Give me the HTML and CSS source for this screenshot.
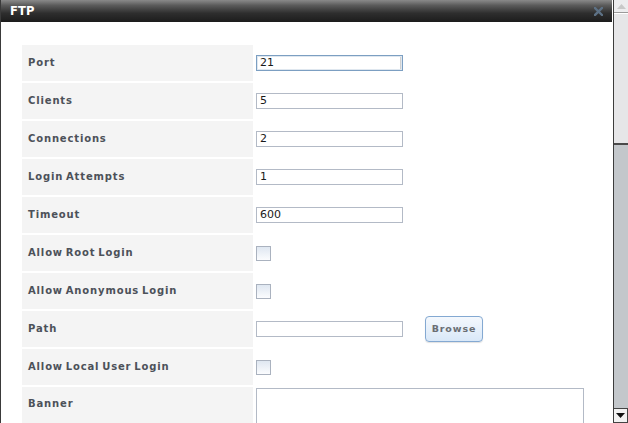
FILE: index.html
```html
<!DOCTYPE html>
<html>
<head>
<meta charset="utf-8">
<link rel="stylesheet" href="styles.css">
</head>
<body>
<div class="frame">
  <div class="dialog">
    <div class="titlebar">
      <span class="title">FTP</span>
      <svg class="close" width="9" height="9" viewBox="0 0 9 9"><path d="M1 1 L8 8 M8 1 L1 8" stroke="#5d7185" stroke-width="2.4" stroke-linecap="square"/></svg>
    </div>
    <div class="content">
      <div class="form">
        <div class="label">Port</div>
        <div class="field"><input class="text focus" type="text" value="21"></div>
        <div class="label">Clients</div>
        <div class="field"><input class="text" type="text" value="5"></div>
        <div class="label">Connections</div>
        <div class="field"><input class="text" type="text" value="2"></div>
        <div class="label">Login Attempts</div>
        <div class="field"><input class="text" type="text" value="1"></div>
        <div class="label">Timeout</div>
        <div class="field"><input class="text" type="text" value="600"></div>
        <div class="label">Allow Root Login</div>
        <div class="field"><span class="check"></span></div>
        <div class="label">Allow Anonymous Login</div>
        <div class="field"><span class="check"></span></div>
        <div class="label">Path</div>
        <div class="field"><input class="text" type="text" value=""><button class="browse">Browse</button></div>
        <div class="label">Allow Local User Login</div>
        <div class="field"><span class="check"></span></div>
        <div class="label tall">Banner</div>
        <div class="field top"><textarea class="area"></textarea></div>
      </div>
    </div>
  </div>
  <div class="scrollbar">
    <div class="sb-btn up"><svg width="9" height="5" viewBox="0 0 9 5"><path d="M0 5 L4.5 0 L9 5 Z" fill="#c8c8c8"/></svg></div>
    <div class="sb-thumb"></div>
    <div class="sb-track"></div>
    <div class="sb-btn down"><svg width="9" height="5" viewBox="0 0 9 5"><path d="M0 0 L9 0 L4.5 5 Z" fill="#111"/></svg></div>
  </div>
</div>
</body>
</html>
```
FILE: styles.css
```css
html, body {
  margin: 0;
  padding: 0;
  width: 628px;
  height: 423px;
  overflow: hidden;
  background: #fff;
}
.frame {
  display: flex;
  width: 628px;
  height: 423px;
}
.dialog {
  width: 612px;
  border-left: 1px solid #3a3a3a;
  box-sizing: border-box;
  overflow: hidden;
  background: #fff;
  margin-right: 1px;
}
.titlebar {
  height: 22px;
  background: linear-gradient(#8a8a8a 0%, #5a5a5a 25%, #2e2e2e 60%, #1c1c1c 100%);
  display: flex;
  align-items: center;
  justify-content: space-between;
  padding: 0 9px 0 9px;
  box-sizing: border-box;
}
.title {
  font-family: "DejaVu Sans", sans-serif;
  font-weight: bold;
  font-size: 11.5px;
  color: #fff;
  letter-spacing: 0.2px;
  margin-top: -1px;
}
.close {
  margin-top: 1px;
}
.content {
  padding: 23px 0 0 21px;
}
.form {
  display: grid;
  grid-template-columns: 231px 1fr;
  grid-auto-rows: 36px;
  row-gap: 2px;
}
.label {
  background: #f4f4f4;
  font-family: "DejaVu Sans", sans-serif;
  font-weight: bold;
  font-size: 10px;
  letter-spacing: 0.85px;
  word-spacing: -1.5px;
  color: #4c5159;
  display: flex;
  align-items: center;
  padding-left: 6px;
  padding-bottom: 2px;
  box-sizing: border-box;
}
.label.tall {
  align-items: flex-start;
  padding-top: 11px;
}
.field {
  display: flex;
  align-items: center;
  padding-left: 3px;
}
.field.top {
  align-items: flex-start;
  padding-top: 1px;
}
.text {
  width: 147px;
  height: 16px;
  box-sizing: border-box;
  border: 1px solid #b3bac6;
  padding: 0 3px;
  margin: 0 0 1px 0;
  font-family: "DejaVu Sans", sans-serif;
  font-size: 11px;
  color: #1a1a1a;
  background: #fff;
  outline: none;
}
.text.focus {
  border-color: #7c9fc2;
  box-shadow: inset 0 0 0 1px #dfe7ef, inset -2px 0 0 #d0d0d0;
}
.check {
  width: 15px;
  height: 15px;
  box-sizing: border-box;
  border: 1px solid #aab2bf;
  background: linear-gradient(#dfe7f1, #fbfcfe);
  margin-top: 1px;
}
.browse {
  margin-left: 22px;
  width: 58px;
  height: 26px;
  box-sizing: border-box;
  border: 1px solid #84a9d2;
  border-radius: 4px;
  background: linear-gradient(#f4f8fd, #d9e8f8);
  font-family: "DejaVu Sans", sans-serif;
  font-weight: bold;
  font-size: 9.5px;
  letter-spacing: 0.9px;
  color: #6a6e74;
  padding: 0 0 2px 0;
  box-shadow: 0 1px 1px rgba(0,0,0,0.12);
}
.area {
  width: 328px;
  height: 60px;
  box-sizing: border-box;
  border: 1px solid #b3bac6;
  resize: none;
  margin: 0;
  outline: none;
}
.scrollbar {
  width: 15px;
  height: 423px;
  display: flex;
  flex-direction: column;
  background: #c3c7cb;
  border-left: 1px solid #3c3c3c;
  box-sizing: border-box;
}
.sb-btn {
  height: 13px;
  display: flex;
  align-items: center;
  justify-content: center;
  background: #eaeaec;
  box-sizing: border-box;
}
.sb-btn.up {
  border-bottom: 1px solid #9a9a9a;
  background: #ececee;
}
.sb-btn.down {
  height: 15px;
  background: #f2f2f2;
  border: 1px solid #444;
  border-left: none;
}
.sb-thumb {
  height: 132px;
  background: #e6e6e8;
  border-top: 1px solid #fff;
  border-bottom: 2px solid #4a4a4a;
  box-sizing: border-box;
}
.sb-track {
  flex: 1;
}
```
